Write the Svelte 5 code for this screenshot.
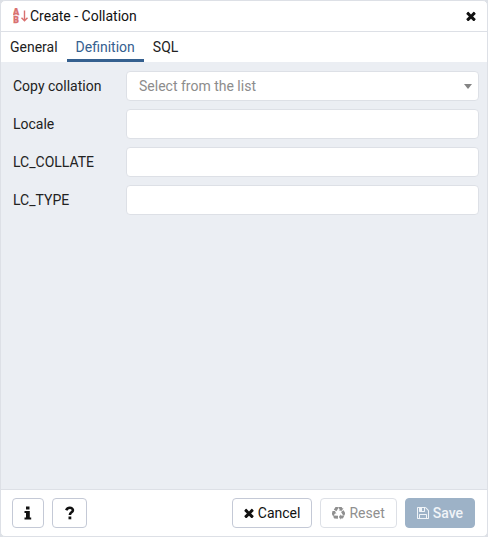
<script>
  const tabs = ['General', 'Definition', 'SQL'];
  let active = $state('Definition');
  let copyFrom = $state('');
  let values = $state({ locale: '', collate: '', ctype: '' });
  const fields = [
    { key: 'locale', label: 'Locale' },
    { key: 'collate', label: 'LC_COLLATE' },
    { key: 'ctype', label: 'LC_TYPE' }
  ];
</script>

{#snippet cross()}
  <svg class="icon" viewBox="256 256 1280 1280" width="10" height="10" aria-hidden="true">
    <path d="M1490 1322q0 40-28 68l-136 136q-28 28-68 28t-68-28l-294-294-294 294q-28 28-68 28t-68-28l-136-136q-28-28-28-68t28-68l294-294-294-294q-28-28-28-68t28-68l136-136q28-28 68-28t68 28l294 294 294-294q28-28 68-28t68 28l136 136q28 28 28 68t-28 68l-294 294 294 294q28 28 28 68z" />
  </svg>
{/snippet}

<div class="dialog" role="dialog" aria-labelledby="title">
  <header>
    <svg class="collation" viewBox="0 0 16 16" width="16" height="16" aria-hidden="true">
      <text x="0" y="7">A</text>
      <text x="0" y="15">B</text>
      <path d="M11.5 2.5V13M8.5 9.7L11.5 12.8L14.5 9.7" />
    </svg>
    <h1 id="title">Create - Collation</h1>
    <button class="close" aria-label="Close">{@render cross()}</button>
  </header>

  <div class="tabs" role="tablist">
    {#each tabs as tab}
      <button role="tab" class:active={tab === active} aria-selected={tab === active} onclick={() => (active = tab)}>{tab}</button>
    {/each}
  </div>

  <main>
    <div class="row">
      <label for="copy">Copy collation</label>
      <div class="select">
        <select id="copy" bind:value={copyFrom}>
          <option value="">Select from the list</option>
        </select>
        <svg viewBox="0 0 8 5" width="8" height="5" aria-hidden="true"><path d="M0 0H8L4 5Z" /></svg>
      </div>
    </div>
    {#each fields as field}
      <div class="row">
        <label for={field.key}>{field.label}</label>
        <input id={field.key} type="text" bind:value={values[field.key]} />
      </div>
    {/each}
  </main>

  <footer>
    <button class="btn square" aria-label="Information">
      <svg class="icon" viewBox="0 0 8 14" width="8" height="14" aria-hidden="true">
        <path d="M2 0.5H5.5V3.5H2ZM0.5 5H5.8V11.5H7.2V13.5H0.5V11.5H2V7H0.5Z" />
      </svg>
    </button>
    <button class="btn square help" aria-label="Help">
      <svg class="icon" viewBox="0 0 10 14" width="10" height="14" aria-hidden="true">
        <path class="hook" d="M1.2 4.2C2 2.5 3.2 1.8 4.8 1.8C6.6 1.8 7.9 2.7 7.9 4.2C7.9 6.5 4.9 6.2 4.9 9" />
        <path d="M3.5 10.5H6.3V13.3H3.5Z" />
      </svg>
    </button>
    <span class="spacer"></span>
    <button class="btn">{@render cross()}Cancel</button>
    <button class="btn" disabled>
      <svg class="icon" viewBox="64 64 1664 1664" width="13" height="13" aria-hidden="true">
        <path d="M836 1169l-15 368-2 22-420-29q-36-3-67-31.5t-47-65.5q-11-27-14.5-55t4-65 12-55 21.5-64 19-53q78 12 509 28zm-387-586l180 379-147-92q-63 72-111.5 144.5t-72.5 125-39.5 94.5-18.5 63l-4 21-190-357q-17-26-18-56t6-47l8-18q35-63 114-188l-140-86zm1231 517l-188 359q-12 29-36.5 46.5t-43.5 20.5l-18 4q-71 7-219 12l8 164-230-367 211-362 7 173q170 16 283 5t170-33zm-785-924q-47 63-265 435l-317-187-19-12 225-356q20-31 60-45t80-10q24 2 48.5 12t42 21 41.5 33 36 34.5 36 39.5 32 35zm655 307l212 363q18 37 12.5 76t-27.5 74q-13 20-33 37t-38 28-48.5 22-47 16-51.5 14-46 12q-34-72-265-436l313-195zm-143-226l142-83-220 373-419-20 151-86q-34-89-75-166t-75.5-123.5-64.5-80-47-46.5l-17-13 405 1q31-3 58 10.5t39 28.5l11 15q39 61 112 190z" />
      </svg>Reset
    </button>
    <button class="btn primary" disabled>
      <svg class="icon" viewBox="128 128 1536 1536" width="12" height="12" aria-hidden="true">
        <path d="M512 1536h768v-384h-768v384zm896 0h128v-896q0-14-10-38.5t-20-34.5l-281-281q-10-10-34-20t-39-10v416q0 40-28 68t-68 28h-576q-40 0-68-28t-28-68v-416h-128v1280h128v-416q0-40 28-68t68-28h832q40 0 68 28t28 68v416zm-384-928v-320q0-13-9.5-22.5t-22.5-9.5h-192q-13 0-22.5 9.5t-9.5 22.5v320q0 13 9.5 22.5t22.5 9.5h192q13 0 22.5-9.5t9.5-22.5zm640 32v928q0 40-28 68t-68 28h-1344q-40 0-68-28t-28-68v-1344q0-40 28-68t68-28h928q40 0 88 20t76 48l280 280q28 28 48 76t20 88z" />
      </svg>Save
    </button>
  </footer>
</div>

<style>
  :global(body) {
    background: #dde0e6;
  }
  .dialog {
    box-sizing: border-box;
    min-height: 100vh;
    display: flex;
    flex-direction: column;
    border: 1px solid #dde0e6;
    border-radius: 5px;
    overflow: hidden;
    background: #fff;
    color: #222;
    font: 14px/20px Roboto, sans-serif;
  }
  button,
  input,
  select {
    box-sizing: border-box;
    margin: 0;
    font: inherit;
    color: inherit;
  }
  .icon {
    fill: currentColor;
    flex: none;
  }
  header {
    display: flex;
    align-items: center;
    gap: 1px;
    height: 30px;
    padding: 0 11px 0 12px;
    border-bottom: 1px solid #dde0e6;
    color: #111;
  }
  .collation text {
    font: 700 8px "DejaVu Sans", sans-serif;
    fill: #d9706f;
    stroke: #d9706f;
    stroke-width: 0.3;
  }
  .collation path {
    fill: none;
    stroke: #d9706f;
    stroke-width: 1.4;
  }
  h1 {
    flex: 1;
    margin: 0;
    font: inherit;
  }
  .close {
    display: flex;
    padding: 0;
    border: 0;
    background: none;
  }
  .tabs {
    display: flex;
    height: 30px;
  }
  .tabs button {
    padding: 0 9px;
    border: 0;
    border-top: 3px solid transparent;
    border-bottom: 3px solid transparent;
    background: none;
  }
  .tabs .active {
    color: #35608f;
    border-bottom-color: #35608f;
  }
  main {
    flex: 1;
    display: flex;
    flex-direction: column;
    gap: 8px;
    padding: 9px 8px 9px 12px;
    background: #ebeef3;
  }
  .row {
    display: flex;
    align-items: center;
  }
  label {
    flex: 0 0 113px;
  }
  .select {
    position: relative;
    flex: 1;
    display: flex;
  }
  input,
  select {
    flex: 1;
    min-width: 0;
    height: 30px;
    padding: 0 12px;
    border: 1px solid #dde0e6;
    border-radius: 4px;
    background: #fff;
  }
  select {
    appearance: none;
    color: #8c8c8c;
  }
  .select svg {
    position: absolute;
    right: 7px;
    top: 13px;
    fill: #848484;
    pointer-events: none;
  }
  footer {
    display: flex;
    gap: 8px;
    padding: 8px 12px 8px 11px;
    border-top: 1px solid #dde0e6;
  }
  .spacer {
    flex: 1;
  }
  .btn {
    display: flex;
    align-items: center;
    justify-content: center;
    gap: 4px;
    height: 30px;
    padding: 0 11px;
    border: 1px solid #c4c9d6;
    border-radius: 4px;
    background: #fff;
    color: #111;
  }
  .square {
    width: 32px;
    padding: 0;
  }
  .help {
    width: 35px;
  }
  .hook {
    fill: none;
    stroke: currentColor;
    stroke-width: 2.6;
  }
  .btn:disabled {
    color: #8f8f8f;
    border-color: #dde0e6;
  }
  .primary:disabled {
    background: #9db2c7;
    border-color: #9db2c7;
    color: #f0f4f8;
    font-weight: 500;
  }
</style>
